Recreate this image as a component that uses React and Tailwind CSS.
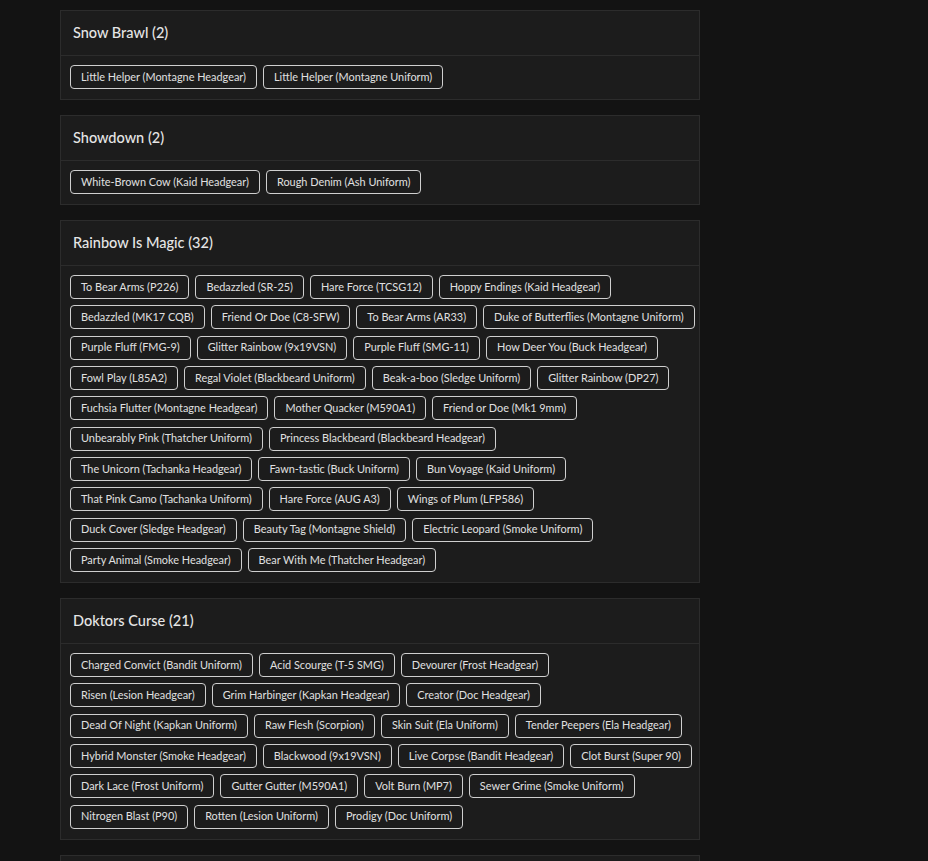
// Each collection lists its items grouped into the rows they show in.
const collections = [
  {
    name: "Snow Brawl",
    rows: [["Little Helper (Montagne Headgear)", "Little Helper (Montagne Uniform)"]],
  },
  {
    name: "Showdown",
    rows: [["White-Brown Cow (Kaid Headgear)", "Rough Denim (Ash Uniform)"]],
  },
  {
    name: "Rainbow Is Magic",
    rows: [
      ["To Bear Arms (P226)", "Bedazzled (SR-25)", "Hare Force (TCSG12)", "Hoppy Endings (Kaid Headgear)"],
      ["Bedazzled (MK17 CQB)", "Friend Or Doe (C8-SFW)", "To Bear Arms (AR33)", "Duke of Butterflies (Montagne Uniform)"],
      ["Purple Fluff (FMG-9)", "Glitter Rainbow (9x19VSN)", "Purple Fluff (SMG-11)", "How Deer You (Buck Headgear)"],
      ["Fowl Play (L85A2)", "Regal Violet (Blackbeard Uniform)", "Beak-a-boo (Sledge Uniform)", "Glitter Rainbow (DP27)"],
      ["Fuchsia Flutter (Montagne Headgear)", "Mother Quacker (M590A1)", "Friend or Doe (Mk1 9mm)"],
      ["Unbearably Pink (Thatcher Uniform)", "Princess Blackbeard (Blackbeard Headgear)"],
      ["The Unicorn (Tachanka Headgear)", "Fawn-tastic (Buck Uniform)", "Bun Voyage (Kaid Uniform)"],
      ["That Pink Camo (Tachanka Uniform)", "Hare Force (AUG A3)", "Wings of Plum (LFP586)"],
      ["Duck Cover (Sledge Headgear)", "Beauty Tag (Montagne Shield)", "Electric Leopard (Smoke Uniform)"],
      ["Party Animal (Smoke Headgear)", "Bear With Me (Thatcher Headgear)"],
    ],
  },
  {
    name: "Doktors Curse",
    rows: [
      ["Charged Convict (Bandit Uniform)", "Acid Scourge (T-5 SMG)", "Devourer (Frost Headgear)"],
      ["Risen (Lesion Headgear)", "Grim Harbinger (Kapkan Headgear)", "Creator (Doc Headgear)"],
      ["Dead Of Night (Kapkan Uniform)", "Raw Flesh (Scorpion)", "Skin Suit (Ela Uniform)", "Tender Peepers (Ela Headgear)"],
      ["Hybrid Monster (Smoke Headgear)", "Blackwood (9x19VSN)", "Live Corpse (Bandit Headgear)", "Clot Burst (Super 90)"],
      ["Dark Lace (Frost Uniform)", "Gutter Gutter (M590A1)", "Volt Burn (MP7)", "Sewer Grime (Smoke Uniform)"],
      ["Nitrogen Blast (P90)", "Rotten (Lesion Uniform)", "Prodigy (Doc Uniform)"],
    ],
  },
];

function Collection({ name, rows }) {
  const count = rows.reduce((n, r) => n + r.length, 0);
  return (
    <section className="mb-[15px] border border-[#2c2c2c] bg-[#1c1c1c]">
      <h2 className="h-[45px] flex items-center px-3 text-[14.5px] font-medium text-[#e6e6e6] border-b border-[#2c2c2c]">
        {name} ({count})
      </h2>
      <div className="flex flex-col gap-y-[6.33px] px-[9px] pt-[9px] pb-[10px]">
        {rows.map((row, i) => (
          <div key={i} className="flex gap-x-1.5">
            {row.map((item) => (
              <span
                key={item}
                className="h-6 flex items-center px-2.5 rounded border border-[#cfcfcf] text-[10.9px] text-[#e0e0e0] whitespace-nowrap"
              >
                {item}
              </span>
            ))}
          </div>
        ))}
      </div>
    </section>
  );
}

export default function App() {
  return (
    <div
      className="h-[861px] overflow-hidden bg-[#131313] pl-[60px] pt-[10px]"
      style={{ fontFamily: "Lato, 'Open Sans', sans-serif" }}
    >
      <div className="w-[640px]">
        {collections.map((c) => (
          <Collection key={c.name} name={c.name} rows={c.rows} />
        ))}
        {/* next collection, still below the fold */}
        <section className="h-24 border border-[#2c2c2c] bg-[#1c1c1c]" />
      </div>
    </div>
  );
}
